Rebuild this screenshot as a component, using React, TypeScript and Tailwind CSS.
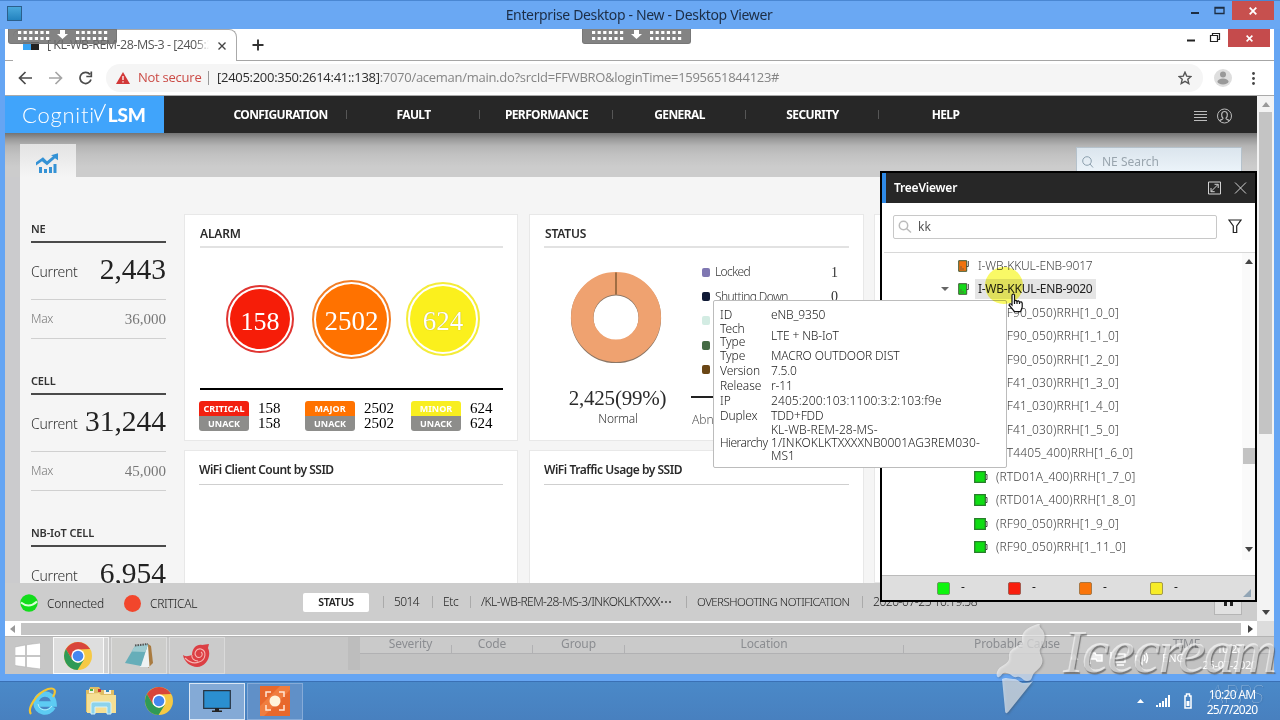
import React from 'react';

interface CounterData {
  label: string;
  current: string;
  max: string;
}

const counters: CounterData[] = [
  { label: 'NE', current: '2,443', max: '36,000' },
  { label: 'CELL', current: '31,244', max: '45,000' },
  { label: 'NB-IoT CELL', current: '6,954', max: '' },
];

const menuItems = ['CONFIGURATION', 'FAULT', 'PERFORMANCE', 'GENERAL', 'SECURITY', 'HELP'];

const radioUnits = [
  '(RF90_050)RRH[1_0_0]',
  '(RF90_050)RRH[1_1_0]',
  '(RF90_050)RRH[1_2_0]',
  '(RF41_030)RRH[1_3_0]',
  '(RF41_030)RRH[1_4_0]',
  '(RF41_030)RRH[1_5_0]',
  '(RT4405_400)RRH[1_6_0]',
  '(RTD01A_400)RRH[1_7_0]',
  '(RTD01A_400)RRH[1_8_0]',
  '(RF90_050)RRH[1_9_0]',
  '(RF90_050)RRH[1_11_0]',
];

const Chrome: React.FC<{ className?: string }> = ({ className = '' }) => (
  <svg viewBox="0 0 28 28" className={className}>
    <circle cx="14" cy="14" r="14" fill="#f6c944" />
    <path d="M1.9 7 A14 14 0 0 1 26.1 7 L14 7.5 L7.9 17.5 Z" fill="#d8453b" />
    <path d="M1.9 7 A14 14 0 0 0 13.5 28 L20 17.5 L14 21 L8 17.5 Z" fill="#2f9a56" />
    <circle cx="14" cy="14" r="6.7" fill="#fff" />
    <circle cx="14" cy="14" r="5.3" fill="#4587f0" />
  </svg>
);

const Grip: React.FC<{ className?: string }> = ({ className = '' }) => (
  <div className={`absolute h-[15px] w-[109px] rounded-b-[3px] border border-t-0 border-[#777] bg-[#6d6d6d]/85 ${className}`}>
    <svg viewBox="0 0 109 15" className="h-[15px] w-[109px]">
      {[0, 1, 2, 3, 4, 5].map((i) =>
        [2, 8].map((y) => (
          <g key={`${i}-${y}`} fill="#fff">
            <rect x={9 + i * 5.6} y={y} width="3.2" height="3" />
            <rect x={67 + i * 5.6} y={y} width="3.2" height="3" />
          </g>
        ))
      )}
      <path d="M51 1h5v4h3l-5.500 5-5.500-5h3z" fill="#fff" />
    </svg>
  </div>
);

const TitleBar = () => (
  <header className="flex h-[29px] items-start border-t border-[#4a87d2] bg-[#6aa8f3]">
    <div className="ml-[7px] mt-[5px] h-[15px] w-[15px] border border-[#2b5f8c] bg-gradient-to-b from-[#49a8dc] to-[#2383bf]" />
    <h1 className="flex-1 pt-[3px] text-center text-[14px] leading-[22px] tracking-[-0.35px] text-[#1c2d45]">
      <span className="ml-[76px]">Enterprise Desktop - New - Desktop Viewer</span>
    </h1>
    <svg viewBox="0 0 52 20" className="h-5 w-[52px]" fill="none" stroke="#1d2d42">
      <path d="M11 12h8" strokeWidth="2" />
      <path d="M35 6.500h9v6h-9zM35 7h9" strokeWidth="1.300" />
    </svg>
    <div className="mr-[6px] flex h-[19px] w-[42px] items-center justify-center bg-[#c7504e]">
      <svg viewBox="0 0 8 8" className="h-2 w-2" stroke="#fff" strokeWidth="1.800">
        <path d="M.7.7l6.600 6.600M7.300.7L.7 7.300" />
      </svg>
    </div>
  </header>
);

const BrowserChrome = () => (
  <div className="bg-white">
    <div className="flex h-8 border-b border-[#a6a6a6]">
      <div className="relative -mb-px ml-[8px] h-8 w-[224px] rounded-t-lg border-r border-t border-[#aaa] bg-white">
        <div className="flex h-full items-center pl-[10px]">
          <span className="h-2 w-2 bg-[#38a4f5]" />
          <span className="h-2 w-2 bg-[#222]" />
          <span className="ml-[8px] w-[162px] overflow-hidden whitespace-nowrap text-[12.500px] tracking-[-0.5px] text-[#555] [mask-image:linear-gradient(to_right,#000_92%,transparent)]">
            [ KL-WB-REM-28-MS-3 - [2405:2
          </span>
          <svg viewBox="0 0 8 8" className="ml-[9px] h-2 w-2" stroke="#444" strokeWidth="1.400">
            <path d="M.5.5l7 7M7.500.5l-7 7" />
          </svg>
        </div>
      </div>
      <svg viewBox="0 0 12 12" className="ml-[15px] mt-[10px] h-3 w-3" stroke="#333" strokeWidth="1.900">
        <path d="M6 .5v11M.5 6h11" />
      </svg>
      <svg viewBox="0 0 54 18" className="ml-auto h-[18px] w-[54px]" fill="none" stroke="#222">
        <path d="M13 11.500h8" strokeWidth="2" />
        <path d="M36.500 6.500h7v6h-7zM38.500 6V4.500h7v6H44" strokeWidth="1.200" />
      </svg>
      <div className="mr-[4px] flex h-[18px] w-[42px] items-center justify-center bg-[#c54b4c]">
        <svg viewBox="0 0 8 8" className="h-[7px] w-[7px]" stroke="#fff" strokeWidth="1.800">
          <path d="M.7.7l6.600 6.600M7.300.7L.7 7.300" />
        </svg>
      </div>
    </div>
    <div className="flex h-[35px] items-center border-b border-[#aaa] pb-px">
      <svg viewBox="0 0 76 14" className="ml-[13px] h-[14px] w-[76px]" fill="none" strokeWidth="1.700">
        <path d="M14 7H2M7.500 1L1.500 7l6 6" stroke="#4b4b4b" />
        <path d="M31 7h12M37.500 1l6 6-6 6" stroke="#a5a5a5" />
        <path d="M72 3.400A5.600 5.600 0 1 0 73 8.500M73.300 .5v5h-5" stroke="#4b4b4b" />
      </svg>
      <div className="ml-3 flex h-7 flex-1 items-center rounded-l-full rounded-r-full bg-[#f5f5f5] pl-[10px]">
        <svg viewBox="0 0 14 12" className="h-3 w-[14px]">
          <path d="M7 0l7 12H0z" fill="#d23838" />
          <path d="M7 4v4M7 9.200v1.400" stroke="#fff" strokeWidth="1.300" />
        </svg>
        <span className="ml-[8px] w-[70px] whitespace-nowrap text-[13px] tracking-[-0.25px] text-[#cb4b46]">Not secure</span>
        <span className="h-[14px] w-px bg-[#999]" />
        <span className="ml-[8px] whitespace-nowrap text-[13px] tracking-[-0.28px] text-[#858585]">
          <span className="text-[#2b2b2b]">[2405:200:350:2614:41::138]</span>:7070/aceman/main.do?srcId=FFWBRO&amp;loginTime=1595651844123#
        </span>
        <svg viewBox="0 0 14 14" className="ml-auto mr-[11px] h-[14px] w-[14px]" fill="none" stroke="#555" strokeWidth="1.400">
          <path d="M7 1.200l1.700 3.900 4.300.4-3.200 2.800 1 4.200L7 10.300l-3.800 2.200 1-4.200L1 5.500l4.300-.4z" />
        </svg>
      </div>
      <svg viewBox="0 0 50 18" className="ml-[11px] mr-[10px] h-[18px] w-[50px]">
        <circle cx="9" cy="9" r="9" fill="#dedede" />
        <circle cx="9" cy="5.500" r="3" fill="#999" />
        <ellipse cx="9" cy="12.500" rx="5.500" ry="3" fill="#999" />
        <g fill="#444">
          <circle cx="39.500" cy="4.500" r="1.400" />
          <circle cx="39.500" cy="9.500" r="1.400" />
          <circle cx="39.500" cy="14.500" r="1.400" />
        </g>
      </svg>
    </div>
  </div>
);

const MainMenu = () => (
  <nav className="relative z-10 flex h-[37px] items-center bg-[#272727]">
    <div className="flex h-full w-[159px] items-center bg-[#40a4fb] pl-[17px] text-white">
      <span className="whitespace-nowrap font-['Lato',sans-serif] text-[22px] font-light tracking-[0.75px]">Cogniti</span>
      <svg viewBox="0 0 12 20" className="-ml-px mb-[4px] h-5 w-3" fill="none" stroke="#fff" strokeWidth="1.200">
        <path d="M.5 6.500L4 17.500 11.500 1" />
      </svg>
      <span className="ml-[2px] mt-px font-['Lato',sans-serif] text-[19px] font-black tracking-[-0.2px]">LSM</span>
    </div>
    <ul className="ml-[50px] flex">
      {menuItems.map((item, i) => (
        <li key={item} className="flex w-[133px] items-center justify-center text-[12px] font-bold tracking-[-0.6px] text-white">
          <span className="flex-1 text-center">{item}</span>
          {i < 5 && <span className="-ml-px h-[9px] w-px bg-[#565656]" />}
        </li>
      ))}
    </ul>
    <svg viewBox="0 0 40 16" className="ml-auto mr-[24px] mt-[2px] h-4 w-10" fill="none" stroke="#bcbcbc">
      <path d="M1 3.500h13M1 6.500h13M1 9.500h13M1 12.500h13" strokeWidth="1" />
      <circle cx="31.500" cy="8" r="7" />
      <path d="M26.500 13.200c.5-2 3.500-1.300 3.500-3-2-2-2-6.700 1.500-6.700s3.500 4.700 1.500 6.700c0 1.700 3 1 3.500 3" strokeWidth="1.200" />
    </svg>
  </nav>
);

const Counter: React.FC<{ data: CounterData }> = ({ data }) => (
  <section className="h-[152px]">
    <h3 className="h-[15px] text-[11px] font-semibold leading-[15px] tracking-[-0.15px] text-[#333]">{data.label}</h3>
    <div className="mt-[5px] flex h-[59px] items-start justify-between border-b border-t-2 border-b-[#d0d0d0] border-t-[#4a4a4a] pt-[8px]">
      <span className="pt-[11px] text-[14px] font-light leading-[20px] tracking-[-0.3px] text-[#333]">Current</span>
      <span className="whitespace-nowrap font-['Liberation_Serif',serif] text-[29.500px] leading-[36px] text-[#222]">{data.current}</span>
    </div>
    <div className="flex h-[39px] items-center justify-between border-b border-[#d0d0d0] text-[#777]">
      <span className="text-[12px] font-light tracking-[-0.3px]">Max</span>
      <span className="font-['Liberation_Serif',serif] text-[15px]">{data.max}</span>
    </div>
  </section>
);

interface AlarmBadgeProps {
  name: string;
  value: string;
  color: string;
  width: string;
}

const AlarmBadge: React.FC<AlarmBadgeProps> = ({ name, value, color, width }) => (
  <div className={`flex ${width}`}>
    <div className="h-[30px] w-[50px] overflow-hidden rounded-[3px] text-center text-[9px] font-bold leading-[15px] text-white">
      <div className={`${color} h-[15px]`}>{name}</div>
      <div className="h-[15px] bg-[#8d8d8b]">UNACK</div>
    </div>
    <div className="ml-[9px] font-['Liberation_Serif',serif] text-[15px] leading-[15px] text-black">
      <div>{value}</div>
      <div>{value}</div>
    </div>
  </div>
);

const AlarmCard = () => (
  <section className="h-[227px] w-[334px] border border-[#e8e8e8] bg-white px-[14px] pt-[10px]">
    <h2 className="ml-px h-[23px] border-b-2 border-[#e2e2e2] text-[12px] font-semibold leading-[17px] tracking-[-0.15px] text-[#2a2a2a]">ALARM</h2>
    <div className="flex h-[140px] items-center pl-[27px] pt-[2px] font-['Liberation_Serif',serif] text-white">
      <div className="flex h-[68px] w-[68px] items-center justify-center rounded-full border-2 border-[#e03532] bg-white p-[2px]">
        <div className="flex h-full w-full items-center justify-center rounded-full bg-[#f61d08] pt-1 text-[26px]">158</div>
      </div>
      <div className="ml-[18px] flex h-[79px] w-[79px] items-center justify-center rounded-full border-2 border-[#f17d25] bg-white p-[2px]">
        <div className="flex h-full w-full items-center justify-center rounded-full bg-[#ff7200] pt-1 text-[27px]">2502</div>
      </div>
      <div className="ml-[15px] flex h-[74px] w-[74px] items-center justify-center rounded-full border-2 border-[#f4ec3a] bg-white p-[2px]">
        <div className="flex h-full w-full items-center justify-center rounded-full bg-[#fbf01d] pt-1 text-[27px] [text-shadow:0_0_1px_#a89e30]">624</div>
      </div>
    </div>
    <div className="ml-px flex border-t-2 border-black pt-[11px]">
      <AlarmBadge name="CRITICAL" value="158" color="bg-[#f2200f]" width="-ml-px w-[106px]" />
      <AlarmBadge name="MAJOR" value="2502" color="bg-[#ff7200]" width="w-[106px]" />
      <AlarmBadge name="MINOR" value="624" color="bg-[#f8ee20]" width="w-[90px]" />
    </div>
  </section>
);

const statusLegend = [
  { name: 'Locked', value: '1', color: 'bg-[#7f77b2]' },
  { name: 'Shutting Down', value: '0', color: 'bg-[#101a36]' },
  { name: '', value: '', color: 'bg-[#d3ece3]' },
  { name: '', value: '', color: 'bg-[#456b45]' },
  { name: '', value: '', color: 'bg-[#6a4615]' },
];

const StatusCard = () => (
  <section className="h-[227px] w-[335px] border border-[#e8e8e8] bg-white px-[14px] pt-[10px]">
    <h2 className="h-[23px] border-b-2 border-[#e2e2e2] pl-px text-[12px] font-semibold leading-[17px] tracking-[-0.15px] text-[#2a2a2a]">STATUS</h2>
    <div className="flex">
      <div className="w-[147px] pt-[24px] text-center">
        <svg viewBox="0 0 92 92" className="ml-[26px] h-[92px] w-[92px]">
          <circle cx="46" cy="46" r="33.800" fill="none" stroke="#8c7766" strokeWidth="22.600" />
          <circle cx="46" cy="45" r="33.800" fill="none" stroke="#efa270" strokeWidth="22.400" />
          <path d="M46 .500v22" stroke="#6a4a25" strokeWidth="1.200" />
        </svg>
        <p className="mt-[20px] font-['Liberation_Serif',serif] text-[21px] leading-[28px] tracking-[-0.2px] text-[#2a2a2a]">2,425(99%)</p>
        <p className="pl-px text-[12px] font-light leading-[14px] tracking-[-0.2px] text-[#333]">Normal</p>
      </div>
      <div className="flex-1 pt-[12px]">
        {statusLegend.map((row) => (
          <div key={row.color} className="flex h-[24.400px] items-center pl-[11px] text-[12px] font-light text-[#333]">
            <span className={`h-[9px] w-[8px] rounded-[2px] ${row.color}`} />
            <span className="ml-[5px] flex-1 whitespace-nowrap tracking-[-0.6px]">{row.name}</span>
            <span className="mr-[11px] font-['Liberation_Serif',serif] text-[14px]">{row.value}</span>
          </div>
        ))}
        <div className="mt-[14px] border-t-2 border-[#222] pl-[1px] pt-[13px] text-[12px] font-light text-[#555]">Abnormal</div>
      </div>
    </div>
  </section>
);

const WifiCard: React.FC<{ title: string; className: string }> = ({ title, className }) => (
  <section className={`h-[133px] border border-b-0 border-[#e8e8e8] bg-white px-[14px] pt-[10px] ${className}`}>
    <h2 className="h-[24px] border-b border-[#cfcfcf] text-[12px] font-semibold leading-[18px] tracking-[-0.48px] text-[#2a2a2a]">{title}</h2>
  </section>
);

const Dashboard = () => (
  <main className="flex h-[450px] flex-col bg-[#cbcbcd] pl-[15px]">
    <div className="-ml-[15px] flex h-[44px] items-end justify-between bg-[linear-gradient(#747474_0px,#999_6px,#b5b5b5_13px,#c2c2c2_22px,#cccccc_34px)] pl-[15px] pr-[15px]">
      <div className="flex h-[33px] w-[56px] items-center justify-center bg-gradient-to-b from-[#e3e3e3] to-[#f5f5f5]">
        <svg viewBox="0 0 22 20" className="mr-[2px] mt-1 h-5 w-[22px]" fill="#3492d5">
          <path d="M0 9l7-5 4 4 6-5-2-1 7-2v7l-3-2-8 7-5-4-7 5z" transform="translate(0 .3)" />
          <path d="M3 14h3v6H3zM8 16h3v4H8zM13 14h3v6h-3zM17.500 11h3v9h-3z" />
        </svg>
      </div>
      <div className="flex h-[30px] w-[166px] items-center border border-[#b5c2cc] bg-gradient-to-b from-[#dbe5ed] to-[#eff6fc] pl-[5px] text-[12px] text-[#99a5ae]">
        <svg viewBox="0 0 12 12" className="h-3 w-3" fill="none" stroke="#8ca0ae">
          <circle cx="5" cy="5" r="4.300" />
          <path d="M8 8l3 3.500" />
        </svg>
        <span className="ml-[8px]">NE Search</span>
      </div>
    </div>
    <div className="flex min-h-0 flex-1 overflow-hidden bg-[#f5f5f5]">
      <aside className="ml-[11px] w-[135px] pt-[44px]">
        {counters.map((data) => (
          <Counter key={data.label} data={data} />
        ))}
      </aside>
      <div className="ml-[18px] grid grid-cols-[335px_335px_200px] content-start gap-x-[10px] gap-y-[9px] pt-[37px]">
        <AlarmCard />
        <StatusCard />
        <section className="border border-[#e8e8e8] bg-white" />
        <WifiCard title="WiFi Client Count by SSID" className="w-[334px]" />
        <WifiCard title="WiFi Traffic Usage by SSID" className="w-[335px]" />
        <section className="border border-[#e8e8e8] bg-white" />
      </div>
    </div>
  </main>
);

const StatusBar = () => (
  <footer className="flex h-[38px] items-center overflow-hidden whitespace-nowrap bg-[#cdcdcd] text-[12px] font-light text-[#222]">
    <svg viewBox="0 0 18 18" className="ml-[15px] mt-[2px] h-[18px] w-[18px]">
      <circle cx="9" cy="9" r="8.700" fill="#12dd1b" />
      <path d="M1 8.500q8 6.500 16-1" fill="none" stroke="#d8ffd8" strokeWidth="2" />
    </svg>
    <span className="ml-[9px] mt-[4px] w-[77px] tracking-[-0.25px]">Connected</span>
    <span className="mt-[2px] h-[17px] w-[17px] rounded-full bg-[#f2462c]" />
    <span className="ml-[9px] mt-[4px] w-[153px] tracking-[-0.3px]">CRITICAL</span>
    <span className="h-[19px] w-[66px] rounded-[2px] bg-white text-center text-[10.500px] font-semibold leading-[19px] tracking-[-0.2px]">STATUS</span>
    <span className="ml-[14px] w-[49px] border-l border-[#aaa] pl-[10px] leading-[12px] tracking-[-0.6px]">5014</span>
    <span className="w-[38px] border-l border-[#aaa] pl-[10px] leading-[12px] tracking-[-0.3px]">Etc</span>
    <span className="w-[216px] border-l border-[#aaa] pl-[10px] leading-[12px] tracking-[-0.58px]">/KL-WB-REM-28-MS-3/INKOKLKTXXX⋯</span>
    <span className="w-[176px] border-l border-[#aaa] pl-[10px] text-[11.500px] leading-[12px] tracking-[-0.55px]">OVERSHOOTING NOTIFICATION</span>
    <span className="border-l border-[#aaa] pl-[10px] leading-[12px] tracking-[-0.45px]">2020-07-25 10:19:58</span>
    <span className="ml-auto mr-[15px] flex h-[25px] w-[28px] items-center justify-center gap-[3px] border border-[#b5b5b5] bg-[#e1e1e1]">
      <i className="h-2 w-[3px] bg-[#222]" />
      <i className="h-2 w-[3px] bg-[#222]" />
    </span>
  </footer>
);

const VerticalScrollbar = () => (
  <div className="flex w-[17px] flex-col items-center bg-[#f3f3f3]">
    <svg viewBox="0 0 8 5" className="mt-[6px] h-[5px] w-2"><path d="M0 5l4-5 4 5z" fill="#999" /></svg>
    <div className="mt-[5px] h-[322px] w-[13px] bg-[#c4c4c4]" />
    <svg viewBox="0 0 8 5" className="mb-[6px] mt-auto h-[5px] w-2"><path d="M0 0l4 5 4-5z" fill="#444" /></svg>
  </div>
);

const HorizontalScrollbar = () => (
  <div className="flex h-[15px] items-center bg-white">
    <svg viewBox="0 0 5 8" className="ml-[5px] h-2 w-[5px]"><path d="M5 0v8L0 4z" fill="#999" /></svg>
    <div className="ml-[6px] h-[12px] w-[1220px] bg-[#c4c4c4]" />
    <svg viewBox="0 0 5 8" className="ml-[7px] h-2 w-[5px]"><path d="M0 0v8l5-4z" fill="#444" /></svg>
    <div className="ml-auto h-full w-[17px] bg-[#dcdcdc]" />
  </div>
);

const columns = [
  { name: 'Severity', width: 'w-[92px] pl-[10px]' },
  { name: 'Code', width: 'w-[81px]' },
  { name: 'Group', width: 'w-[92px]' },
  { name: 'Location', width: 'w-[279px]' },
  { name: 'Probable Cause', width: 'w-[227px]' },
  { name: 'TIME', width: 'w-[112px]' },
];

const RemoteTaskbar = () => (
  <div className="flex h-[38px] border-t border-[#b4b4b4] bg-[#c6c6c6] text-[12px] text-[#8b8d91]">
    <div className="flex w-[40px] items-center justify-center pl-[6px]">
      <svg viewBox="0 0 26 26" className="h-[26px] w-[26px]" fill="#fff" stroke="#aaa" strokeWidth=".5">
        <path d="M0 4l10.500-2v10.500H0zM11.500 1.800L25.500 0v12.500h-14zM0 13.500h10.500V24L0 22.500zM11.500 13.500h14V26l-14-1.800z" />
      </svg>
    </div>
    <div className="ml-[8px] flex h-[37px] w-[51px] items-center justify-center border border-[#fafafa] bg-[#dedede]">
      <Chrome className="mr-[2px] h-7 w-7" />
    </div>
    <div className="w-[5px] border border-l-0 border-[#f0f0f0] bg-[#d2d2d2]" />
    <div className="ml-[2px] flex w-[56px] items-center justify-center border border-[#dedede] bg-[#cdcdcb]">
      <svg viewBox="0 0 30 27" className="mr-px h-[27px] w-[30px]">
        <path d="M24 2l3 2 2 17-5 5z" fill="#a97b40" />
        <path d="M24 3l1.500 22-9.500 0z" fill="#eef2f3" />
        <path d="M11 4l13-2-7 22-16-3z" fill="#66aeb9" />
        <path d="M11 4l13-2-2.500 8-14-.5z" fill="#9ecbd0" />
        <path d="M11 3.500l13-1.500" stroke="#555" strokeDasharray="1.500 1" strokeWidth="2" />
      </svg>
    </div>
    <div className="ml-[2px] flex w-[56px] items-center justify-center border border-[#dadada] bg-[#cbcbcb]">
      <svg viewBox="0 0 28 24" className="h-6 w-7">
        <path d="M0 11c3 2 6 1 9 0C9 4 14 0 19 1l7-1-1 4c4 8-2 19-11 19C8 23 1 18 0 11z" fill="#dc3f44" />
        <path d="M2 14c4 4 9 6 14 4 7-2 8-11 2-13-5-1-8 5-4 8 4 2 7-3 4-5M9 11c-1 3 2 6 6 6" fill="none" stroke="#f7b5b2" strokeWidth="1.100" />
      </svg>
    </div>
    <div className="ml-[123px] h-[33px] w-[12px] bg-[#bdbdbd]" />
    <div className="flex-1 bg-[#c2c2c2]">
      <div className="flex h-[17px] border-b border-[#b1b1b3] bg-[#cacaca] text-center leading-[14px]">
        {columns.map((column) => (
          <span key={column.name} className={`border-r tracking-[-0.15px] [border-image:linear-gradient(transparent_50%,#b1b1b3_50%)_1] ${column.width}`}>
            {column.name}
          </span>
        ))}
      </div>
      <div className="flex items-center justify-end pr-[17px] text-white">
        <svg viewBox="0 0 78 16" className="-mt-[11px] mr-[13px] h-4 w-[78px]" fill="none" stroke="#fff" strokeWidth="1.500">
          <path d="M0 9l3-4 3 4z" fill="#fff" />
          <path d="M19 2v12M19 3h5l1 2h6v6h-5l-1-2h-6z" fill="#eee" />
          <path d="M43 4h11v8H43zM46 15h7M40 2v6h3" />
          <path d="M65 6h2l4-4v12l-4-4h-2zM73 5q2 3 0 6M75 3q3 5 0 10" />
        </svg>
        <span className="-mt-[11px] mr-[18px] text-[11px]">ENG</span>
        <span className="-mt-[13px] text-right text-[11px] leading-[16px] tracking-[-0.3px]"><span className="block pr-[14px]">10:20</span>25-07-2020</span>
      </div>
    </div>
  </div>
);

const NodeIcon: React.FC<{ color: string }> = ({ color }) => (
  <svg viewBox="0 0 11 12" className="h-3 w-[11px]">
    <path d="M.7.7h8v10.600h-8z" fill={color} stroke="#3f5a35" />
    <path d="M10.300 1v5.500H8.500" fill="none" stroke="#444" />
    <path d="M2 7h2M2 9h4" stroke="#654" strokeWidth=".8" />
  </svg>
);

const TreeViewer = () => (
  <aside className="absolute left-[880px] top-[171px] z-20 flex h-[431px] w-[377px] flex-col border-2 border-black bg-white">
    <div className="flex h-[30px] items-center border-l-[4px] border-[#2f8ae6] bg-[#272727] pl-[8px] pr-[8px]">
      <h2 className="text-[12px] font-semibold tracking-[-0.2px] text-white">TreeViewer</h2>
      <svg viewBox="0 0 40 14" className="ml-auto h-[14px] w-10" fill="none" stroke="#d2d2d2">
        <path d="M1.500 1h12v12h-12zM4 10.500L11 3.500M7.500 3.300h3.700V7M4 7v3.700h3.700" />
        <path d="M28 1.500l11 11M39 1.500l-11 11" />
      </svg>
    </div>
    <div className="ml-[2px] flex h-[50px] items-start border-b border-[#d8d8d8] pl-[9px] pt-[12px]">
      <div className="flex h-6 w-[324px] items-center rounded-[2px] border border-[#c8c8c8] pl-[4px] text-[12px] text-[#555]">
        <svg viewBox="0 0 14 14" className="h-[14px] w-[14px]" fill="none" stroke="#bbb" strokeWidth="1.500">
          <circle cx="5.500" cy="5.500" r="4.200" />
          <path d="M8.500 8.500l4.500 4" />
        </svg>
        <span className="ml-[6px]">kk</span>
      </div>
      <svg viewBox="0 0 14 14" className="ml-[11px] mt-[4px] h-[14px] w-[14px]" fill="none" stroke="#222" strokeWidth="1.200">
        <path d="M1 1h12L8.700 7v6.500H5.300V7z" />
      </svg>
    </div>
    <div className="flex h-[322px] text-[12px] font-light tracking-[0.12px] text-[#444]">
      <ul className="min-w-0 flex-1 pt-px">
        <li className="flex h-[23.500px] items-center pl-[76px]">
          <NodeIcon color="#f0720f" />
          <span className="ml-[9px] tracking-[-0.13px]">I-WB-KKUL-ENB-9017</span>
        </li>
        <li className="flex h-[23.500px] items-center pl-[59px]">
          <svg viewBox="0 0 8 4" className="h-1 w-2"><path d="M0 0h8L4 4z" fill="#666" /></svg>
          <span className="ml-[9px]"><NodeIcon color="#14d919" /></span>
          <span className="ml-[6px] flex h-5 items-center bg-[#e5e5e5] pl-[3px] pr-1 font-normal tracking-[-0.28px] text-[#222]">I-WB-KKUL-ENB-9020</span>
        </li>
        {radioUnits.map((name) => (
          <li key={name} className="flex h-[23.440px] items-center pl-[92px]">
            <svg viewBox="0 0 14 12" className="h-3 w-[14px]">
              <path d="M.7.7h10.600v10.600H.7z" fill="#10dd14" stroke="#287d2b" strokeWidth="1.300" />
              <path d="M11.500 3.500H13v5h-1.500" fill="none" stroke="#444" />
            </svg>
            <span className="ml-[8px] whitespace-nowrap">{name}</span>
          </li>
        ))}
      </ul>
      <div className="flex h-[307px] w-[13px] flex-col items-center bg-[#fafafa]">
        <svg viewBox="0 0 8 5" className="mt-[6px] h-[5px] w-2"><path d="M0 5l4-5 4 5z" fill="#444" /></svg>
        <div className="mt-[184px] h-[16px] w-[12px] bg-[#c3c3c3]" />
        <svg viewBox="0 0 8 5" className="mb-[8px] mt-auto h-[5px] w-2"><path d="M0 0l4 5 4-5z" fill="#444" /></svg>
      </div>
    </div>
    <div className="flex flex-1 items-center border-t border-[#bbb] bg-[#dedede] pl-[55px] text-[12px] leading-[12px] text-[#222]">
      <span className="h-[13px] w-[13px] rounded-[2px] border border-[#6a9b60] bg-[#0ef50e]" />
      <span className="mb-[3px] w-[58px] pl-[11px]">-</span>
      <span className="h-[13px] w-[13px] rounded-[2px] border border-[#a35b50] bg-[#f81e0d]" />
      <span className="mb-[3px] w-[58px] pl-[11px]">-</span>
      <span className="h-[13px] w-[13px] rounded-[2px] border border-[#a87845] bg-[#fa750b]" />
      <span className="mb-[3px] w-[58px] pl-[11px]">-</span>
      <span className="h-[13px] w-[13px] rounded-[2px] border border-[#a39a4a] bg-[#f7ec28]" />
      <span className="mb-[3px] pl-[11px]">-</span>
      <svg viewBox="0 0 8 8" className="ml-auto mr-[4px] mt-[10px] h-2 w-2"><path d="M8 0v8H0z" fill="#92a5b5" /></svg>
    </div>
  </aside>
);

const details = [
  ['ID', 'eNB_9350', 'h-[15px]'],
  ['Tech Type', 'LTE + NB-IoT', 'h-[26px]'],
  ['Type', 'MACRO OUTDOOR DIST', 'h-[15px]'],
  ['Version', '7.5.0', 'h-[15px]'],
  ['Release', 'r-11', 'h-[15px]'],
  ['IP', '2405:200:103:1100:3:2:103:f9e', 'h-[15px]'],
  ['Duplex', 'TDD+FDD', 'h-[15px]'],
];

const NodeTooltip = () => (
  <div className="absolute left-[713px] top-[300px] z-30 h-[168px] w-[294px] rounded-[2px] border border-[#bcbcbc] bg-white pl-[6px] pt-[6px] text-[12px] font-light leading-[13px] text-[#222]">
    {details.map(([label, value, height]) => (
      <div key={label} className={`flex items-center ${height}`}>
        <span className="w-[51px] pr-[10px] tracking-[-0.1px]">{label}</span>
        <span className={`whitespace-nowrap ${label === 'IP' ? 'tracking-[0.1px]' : 'tracking-[-0.15px]'}`}>{value}</span>
      </div>
    ))}
    <div className="flex h-[39px] items-center">
      <span className="w-[51px] tracking-[-0.5px]">Hierarchy</span>
      <span className="whitespace-nowrap tracking-[0.04px]">
        KL-WB-REM-28-MS-
        <br />
        1/INKOKLKTXXXXNB0001AG3REM030-
        <br />
        MS1
      </span>
    </div>
  </div>
);

const Pointer = () => (
  <>
    <div className="absolute left-[985px] top-[267px] z-40 h-[37px] w-[38px] rounded-full bg-[#f5f500]/60 mix-blend-multiply" />
    <svg viewBox="0 0 16 20" className="absolute left-[1008px] top-[293px] z-40 h-5 w-4" fill="#fff" stroke="#111" strokeWidth="1.200">
      <path d="M4 12V2q1.500-2 2.500 0v6q1.500-1.500 2.500.5 1.500-1.500 2.500.7 2-1.200 2.700 1v4l-1.700 4.500H6.500L1 12q.5-2.500 3 0z" />
      <path d="M6.500 8v3M9 8.500V11M11.500 9.500V11" />
    </svg>
  </>
);

const LocalTaskbar = () => (
  <div className="flex h-[39px] items-center border-t border-[#3a70b4] bg-gradient-to-b from-[#4a89c8] to-[#4880bf]">
    <svg viewBox="0 0 30 30" className="ml-[28px] h-[30px] w-[30px]" fill="none">
      <path d="M25 21c-4 8-17 6-17-4 0-11 17-13 18 1H9" stroke="#5dcbf3" strokeWidth="5.500" />
      <path d="M24 20c-4 6-13 5-14-2" stroke="#b2ecfb" strokeWidth="1" />
      <path d="M3 28C-1 23 8 7 20 3c8-2 8 3 5 8" stroke="#f3c531" strokeWidth="2.200" />
    </svg>
    <svg viewBox="0 0 30 28" className="ml-[28px] h-7 w-[30px]">
      <path d="M0 3h3l1-3h9l2 3h13v22H0z" fill="#dfbd63" />
      <path d="M3 2h5v4H3zM18 3h7v4h-7z" fill="#f7f1df" />
      <path d="M4 2h3v2H4z" fill="#46b23d" />
      <path d="M12 2h3v3h-3z" fill="#c33" />
      <path d="M20 3h3v2h-3z" fill="#38b" />
      <path d="M1 7l12-1 2 2h15v18H1z" fill="#f5df94" />
      <path d="M5 27V17q0-2 2-2h16q2 0 2 2v10h-4v-7H9v7z" fill="#8cd3ec" stroke="#d5f2fa" />
    </svg>
    <Chrome className="ml-[29px] h-7 w-7" />
    <div className="ml-[16px] flex h-[37px] w-[56px] items-center justify-center border border-[#dbe7f5] bg-[#84aad6]">
      <svg viewBox="0 0 28 23" className="h-[23px] w-7">
        <path d="M.7.700h26.600v17.600H.7z" fill="#2b8fd0" stroke="#273442" strokeWidth="1.200" />
        <path d="M12 18h4v2.500h3V22H9v-1.500h3z" fill="#222" />
      </svg>
    </div>
    <div className="ml-[2px] flex h-[37px] w-[56px] items-center justify-center border border-[#86abd8] bg-[#6090c8]">
      <svg viewBox="0 0 30 30" className="h-[30px] w-[30px]">
        <path d="M0 0h30v30H0z" fill="#e8682c" />
        <path d="M0 20L20 0h10v4L4 30H0z" fill="#f07d3f" />
        <circle cx="15" cy="15" r="5.500" fill="#fff4da" />
        <path d="M6 11V6h5M19 6h5v5M24 19v5h-5M11 24H6v-5" fill="none" stroke="#ffe6d5" strokeWidth="1.500" />
      </svg>
    </div>
    <svg viewBox="0 0 60 16" className="ml-auto h-4 w-[60px]" fill="#fff">
      <path d="M1 10l3.500-4 3.500 4z" />
      <path d="M20 12h2v2h-2zM23 10h2v4h-2zM26 8h2v6h-2zM29 5h2v9h-2zM32 2h2v12h-2z" />
      <path d="M49 3h1.500V1h3v2H55v12h-6z" fill="none" stroke="#fff" strokeWidth="1.500" />
      <path d="M50.500 8h3v5h-3z" />
    </svg>
    <div className="ml-[8px] mr-[20px] w-[56px] whitespace-nowrap pt-px text-center text-[12px] leading-[15px] tracking-[-0.7px] text-white">
      10:20 AM
      <br />
      25/7/2020
    </div>
  </div>
);

const Watermark = () => (
  <div className="pointer-events-none absolute left-[995px] top-[620px] z-50 h-[100px] w-[285px] overflow-hidden text-white/60">
    <svg viewBox="0 0 56 96" className="absolute left-0 top-0 h-[96px] w-14 drop-shadow-[1px_1px_1px_rgba(60,60,60,.6)]" fill="#fff" fillOpacity=".6">
      <path d="M43 4C37 6 26 10 27 19c1 5-4 6-8 9-6 4-5 7-5 11-1 6-10 6-12 13-1 3 0 6 2 5 3-1 3-5 7-4 5 0 6 5 11 4 5-1 5 4 10 4 6 0 4-5 8-9 4-3 9-8 7-14-1-4-3-5-2-9 3-5 6-10 4-16-1-4-6-6-4-9z" />
      <path d="M7 59c5-2 7 0 11 0 5-1 7 5 12 4 4 0 6-1 8-2L14 91c-2 3-4 3-4-1z" />
    </svg>
    <span className="absolute left-[68px] top-[-4px] font-['Liberation_Serif',serif] text-[62px] font-normal italic leading-[70px] tracking-[-2px] [text-shadow:1px_2px_1px_rgba(70,70,70,.6)]">Icecream</span>
    <span className="absolute left-[214px] top-[61px] font-['Lato',sans-serif] text-[26px] font-thin italic leading-[25px] [text-shadow:1px_1px_1px_rgba(40,60,90,.4)]">APPS</span>
  </div>
);

export default function App() {
  return (
    <div className="relative h-[720px] w-[1280px] overflow-hidden bg-[#65a5f3] font-['Noto_Sans',sans-serif]">
      <TitleBar />
      <div className="ml-[5px] w-[1269px]">
        <div className="font-['Open_Sans',sans-serif]">
          <BrowserChrome />
        </div>
        <div className="flex h-[525px]">
          <div className="w-[1252px]">
            <MainMenu />
            <Dashboard />
            <StatusBar />
          </div>
          <VerticalScrollbar />
        </div>
        <HorizontalScrollbar />
        <RemoteTaskbar />
      </div>
      <div className="h-[7px]" />
      <LocalTaskbar />
      <Grip className="left-[8px] top-[29px]" />
      <Grip className="left-[582px] top-[29px]" />
      <TreeViewer />
      <NodeTooltip />
      <Pointer />
      <Watermark />
    </div>
  );
}
